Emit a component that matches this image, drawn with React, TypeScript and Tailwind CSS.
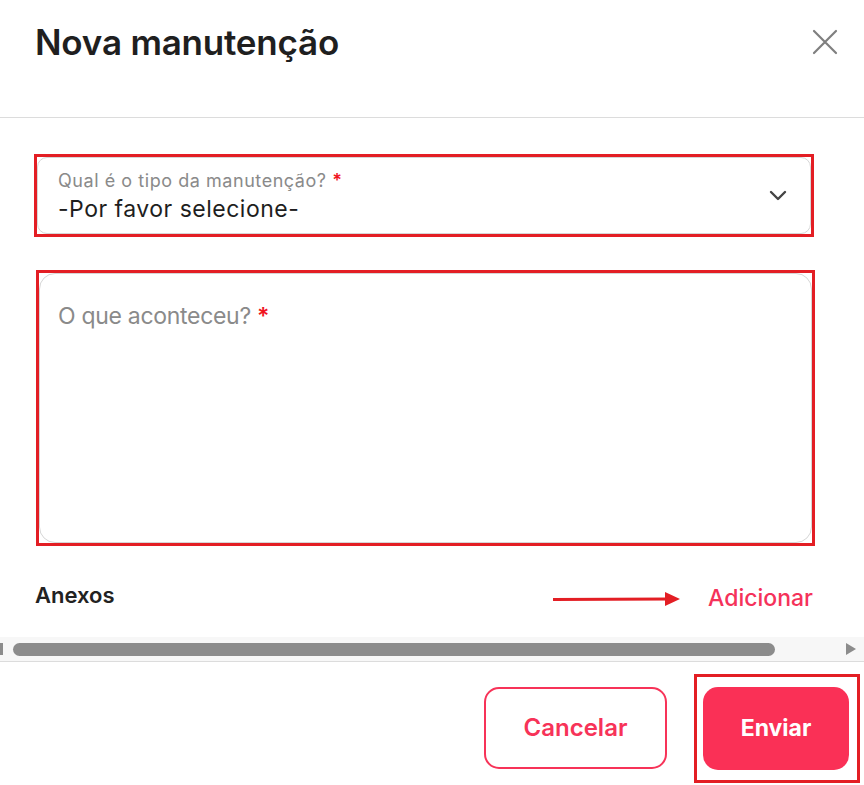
import React from 'react';

const font = { fontFamily: 'Inter, "Noto Sans", sans-serif' };

function CloseIcon() {
  return (
    <svg width="26" height="26" viewBox="0 0 26 26" fill="none" stroke="#7f7f7f" strokeWidth="2.2" strokeLinecap="round">
      <path d="M2 2 L24 24 M24 2 L2 24" />
    </svg>
  );
}

function Chevron() {
  return (
    <svg width="18" height="11" viewBox="0 0 18 11" fill="none" stroke="#444" strokeWidth="2.4" strokeLinecap="round" strokeLinejoin="round">
      <path d="M2 2 L9 9 L16 2" />
    </svg>
  );
}

function Arrow() {
  return (
    <svg width="128" height="16" viewBox="0 0 128 16">
      <line x1="0" y1="8.5" x2="116" y2="8" stroke="#e31e24" strokeWidth="3" />
      <polygon points="112,1 127,8 112,15" fill="#e31e24" />
    </svg>
  );
}

export default function App() {
  return (
    <div className="w-[864px] h-[785px] bg-white overflow-hidden text-[#222]" style={font}>
      {/* Header */}
      <div className="h-[117px] flex items-start justify-between pl-[35px] pr-[26px] pt-[19px]">
        <h1 className="text-[35px] leading-[46px] font-semibold tracking-[-0.2px] text-[#1f1f1f]">Nova manutenção</h1>
        <div className="mt-[10px]">
          <CloseIcon />
        </div>
      </div>
      <div className="h-px bg-[#dcdcdc]" />

      {/* Body */}
      <div className="pt-[36px]">
        <div className="ml-[34px] w-[780px] h-[83px] border-[3px] border-[#e31e24]">
          <div className="h-full border border-[#d6d6d6] rounded-[10px] flex items-center justify-between pl-[20px] pr-[23px]">
            <div className="flex flex-col pt-[2px]">
              <span className="text-[18px] leading-[20px] text-[#8a8a8a] tracking-[0.55px]">
                Qual é o tipo da manutenção? <span className="text-[#f0141e] font-semibold">*</span>
              </span>
              <span className="text-[23px] leading-[27px] mt-[5px] text-[#1e1e1e] tracking-[0.5px]">-Por favor selecione-</span>
            </div>
            <Chevron />
          </div>
        </div>

        <div className="mt-[33px] ml-[36px] w-[779px] h-[276px] border-[3px] border-[#e31e24]">
          <div className="h-full border border-[#d6d6d6] rounded-[16px] pl-[18px] pt-[28px]">
            <span className="text-[23px] leading-[28px] text-[#8a8a8a] tracking-[-0.3px]">
              O que aconteceu? <span className="text-[#f0141e] font-semibold">*</span>
            </span>
          </div>
        </div>

        <div className="mt-[33px] h-[30px] flex items-center pl-[35px] pr-[51px]">
          <span className="text-[22px] mt-[2px] font-semibold text-[#222]">Anexos</span>
          <div className="ml-auto mt-[10px] flex items-center">
            <Arrow />
          </div>
          <span className="ml-[27px] mt-[8px] text-[23px] font-medium text-[#f5325a]">Adicionar</span>
        </div>

        {/* Horizontal scrollbar */}
        <div className="mt-[28px] h-[24px] bg-[#f7f7f7] flex items-center pr-[8px]">
          <div className="w-[3px] h-[12px] bg-[#8c8c8c]" />
          <div className="ml-[10px] w-[762px] h-[13px] rounded-full bg-[#8c8c8c]" />
          <div className="ml-auto w-0 h-0 border-y-[6px] border-y-transparent border-l-[10px] border-l-[#8c8c8c]" />
        </div>
        <div className="h-px bg-[#dcdcdc]" />

        {/* Footer */}
        <div className="pt-[12px] flex items-start justify-end pr-[4px]">
          <button className="mt-[13px] w-[183px] h-[82px] border-2 border-[#f73358] rounded-[15px] text-[24px] font-semibold text-[#f73358]">
            Cancelar
          </button>
          <div className="ml-[27px] w-[166px] h-[109px] border-[3px] border-[#e31e24] pl-[6px] pt-[10px]">
            <button className="w-[146px] h-[83px] rounded-[15px] bg-[#fa3056] text-[23px] font-bold text-white">
              Enviar
            </button>
          </div>
        </div>
      </div>
    </div>
  );
}
